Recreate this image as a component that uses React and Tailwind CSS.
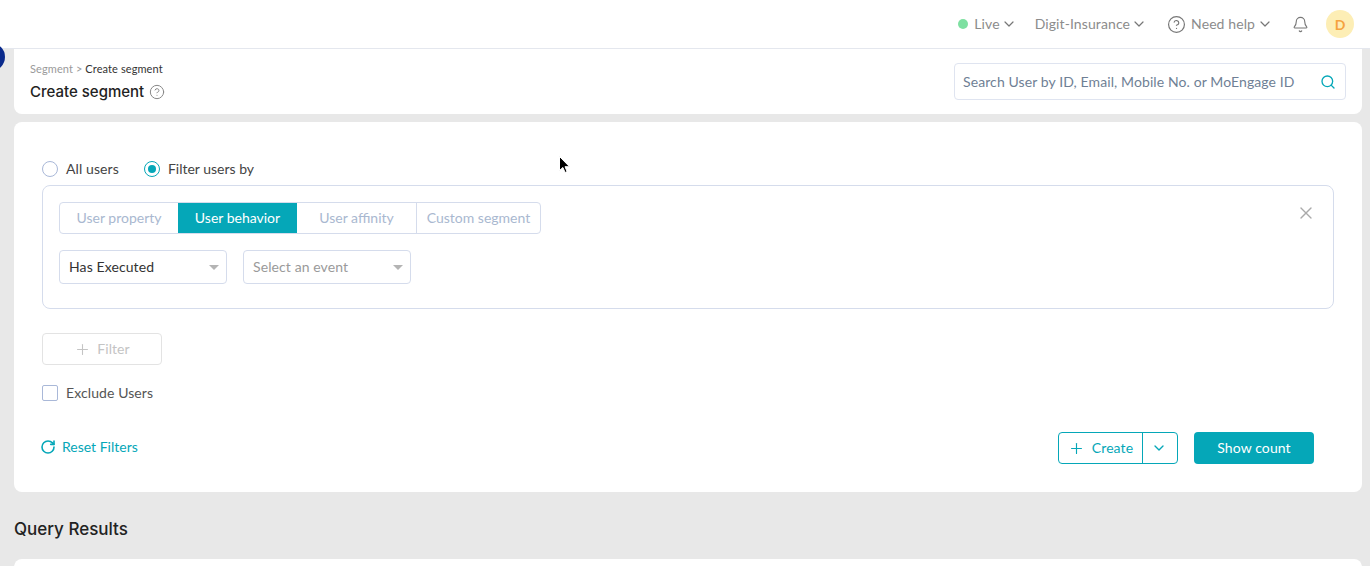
import React from 'react';
import { ChevronDown, HelpCircle, Bell, Search, X, Plus, RotateCw } from 'lucide-react';

const tabs = ['User property', 'User behavior', 'User affinity', 'Custom segment'];

const Dropdown = ({ label, dark }) => (
  <div className="w-[168px] h-[34px] border border-[#d5dcec] rounded-[4px] flex items-center justify-between pl-[9px] pr-[7px]">
    <span className={`pb-[2px] ${dark ? 'text-[#333]' : 'text-[#9a9a9a]'}`}>{label}</span>
    <span className="w-0 h-0 border-x-[5px] border-x-transparent border-t-[5px] border-t-[#b4b4b4]" />
  </div>
);

const App = () => {
  return (
    <div className="relative h-[566px] overflow-hidden bg-[#e8e8e8] text-[14px] tracking-[0.1px] font-['Lato',sans-serif]">
      {/* top bar */}
      <header className="h-[49px] bg-white border-b border-[#e4e7ee] flex items-center justify-end pr-[16px] text-[#8c8c8c]">
        <span className="w-[10px] h-[10px] rounded-full bg-[#7ee0a1] mr-[6px]" />
        <span className="pb-[2px]">Live</span>
        <ChevronDown size={16} strokeWidth={1.8} className="ml-[1px] text-[#777]" />
        <span className="ml-[18px] pb-[2px]">Digit-Insurance</span>
        <ChevronDown size={16} strokeWidth={1.8} className="ml-[1px] text-[#777]" />
        <HelpCircle size={19} strokeWidth={1.5} className="ml-[20px] text-[#777]" />
        <span className="ml-[5px] pb-[2px]">Need help</span>
        <ChevronDown size={16} strokeWidth={1.8} className="ml-[2px] text-[#777]" />
        <Bell size={17} strokeWidth={1.6} className="ml-[19px] text-[#777]" />
        <span className="ml-[17px] w-[28px] h-[28px] rounded-full bg-[#fdeeb5] text-[#f5a33f] font-bold flex items-center justify-center">D</span>
      </header>

      <div className="pl-[14px] pr-[8px]">
        {/* title */}
        <section className="h-[65px] bg-white rounded-b-[8px] flex items-start justify-between pl-[16px] pr-[16px]">
          <div className="pt-[13px]">
            <div className="text-[11px] leading-[13px] text-[#9a9a9a]">
              Segment &gt; <span className="text-[#333]">Create segment</span>
            </div>
            <div className="flex items-center gap-[5px] mt-[7px]">
              <span className="text-[15px] leading-[20px] font-medium tracking-normal font-['Inter',sans-serif] text-[#222]">Create segment</span>
              <HelpCircle size={16} strokeWidth={1.5} className="text-[#888]" />
            </div>
          </div>
          <div className="mt-[14px] w-[392px] h-[37px] border border-[#dfe4f0] rounded-[4px] flex items-center justify-between pl-[8px] pr-[9px]">
            <span className="text-[#6f7f95]">Search User by ID, Email, Mobile No. or MoEngage ID</span>
            <Search size={16} strokeWidth={2} className="text-[#05a7b8]" />
          </div>
        </section>

        {/* filter card */}
        <section className="mt-[8px] h-[370px] bg-white rounded-[8px] pt-[38px] pl-[28px] pr-[28px]">
          <div className="flex items-center h-[18px] text-[#444]">
            <span className="w-[16px] h-[16px] rounded-full border border-[#a9b8d8]" />
            <span className="ml-[8px] pb-[2px]">All users</span>
            <span className="ml-[25px] w-[16px] h-[16px] rounded-full border border-[#05a7b8] flex items-center justify-center">
              <span className="w-[8px] h-[8px] rounded-full bg-[#05a7b8]" />
            </span>
            <span className="ml-[8px] pb-[2px] tracking-normal">Filter users by</span>
          </div>

          <div className="relative mt-[7px] h-[124px] border border-[#d5dcec] rounded-[8px] pt-[16px] pl-[16px]">
            <div className="flex w-[482px] h-[32px] border border-[#d5dcec] rounded-[4px] overflow-hidden tracking-normal">
              {tabs.map((tab, i) => (
                <div
                  key={tab}
                  className={`flex items-center justify-center pb-[2px] ${
                    i === 1 ? 'w-[119px] -my-px bg-[#05a7b8] text-white' : 'text-[#a9b8d0]'
                  } ${i === 0 ? 'w-[118px]' : ''} ${i === 2 ? 'w-[120px] border-r border-[#d5dcec]' : ''} ${i === 3 ? 'flex-1' : ''}`}
                >
                  {tab}
                </div>
              ))}
            </div>
            <div className="flex gap-[16px] mt-[16px]">
              <Dropdown label="Has Executed" dark />
              <Dropdown label="Select an event" />
            </div>
            <X size={20} strokeWidth={1.6} className="absolute right-[17px] top-[17px] text-[#aaa]" />
          </div>

          <div className="mt-[24px] w-[120px] h-[32px] border border-[#e3e3e3] rounded-[4px] flex items-center justify-center gap-[6px] text-[#c4c4c4]">
            <Plus size={17} strokeWidth={1.5} />
            <span className="pb-[2px]">Filter</span>
          </div>

          <div className="flex items-center mt-[20px] h-[16px] text-[#555]">
            <span className="w-[16px] h-[16px] rounded-[2px] border border-[#a9b8d8]" />
            <span className="ml-[8px] pb-[2px]">Exclude Users</span>
          </div>

          <div className="flex items-start justify-between mt-[31px] pr-[20px]">
            <div className="flex items-center gap-[6px] text-[#05a7b8] h-[24px] -ml-[2px] mt-[4px] pb-[2px]">
              <RotateCw size={16} strokeWidth={2.4} />
              <span className="pb-[2px] tracking-normal">Reset Filters</span>
            </div>
            <div className="flex gap-[16px]">
              <div className="flex w-[120px] h-[32px] border border-[#05a7b8] rounded-[4px] text-[#05a7b8]">
                <div className="w-[84px] flex items-center justify-center gap-[7px] border-r border-[#05a7b8]">
                  <Plus size={17} strokeWidth={1.6} />
                  <span className="pb-[2px]">Create</span>
                </div>
                <div className="flex-1 flex items-center justify-center pr-[3px]">
                  <ChevronDown size={16} strokeWidth={2} />
                </div>
              </div>
              <div className="w-[120px] h-[32px] bg-[#05a7b8] rounded-[4px] text-white flex items-center justify-center pb-[2px]">Show count</div>
            </div>
          </div>
        </section>

        <h2 className="mt-[27px] text-[17px] leading-[20px] font-medium tracking-normal font-['Inter',sans-serif] text-[#222]">Query Results</h2>
        <section className="mt-[20px] h-[40px] bg-white rounded-[8px]" />
      </div>

      {/* bits lying over the page */}
      <span className="absolute -left-[23px] top-[43px] w-[28px] h-[28px] rounded-full bg-[#0a2a8c]" />
      <svg className="absolute left-[558px] top-[155px]" width="13" height="20" viewBox="0 0 13 20">
        <path d="M1.5 1.5v14l3.4-3 2.2 5 2-0.9-2.1-4.9h4.5z" fill="#000" stroke="#fff" strokeWidth="1" />
      </svg>
    </div>
  );
};

export default App;
